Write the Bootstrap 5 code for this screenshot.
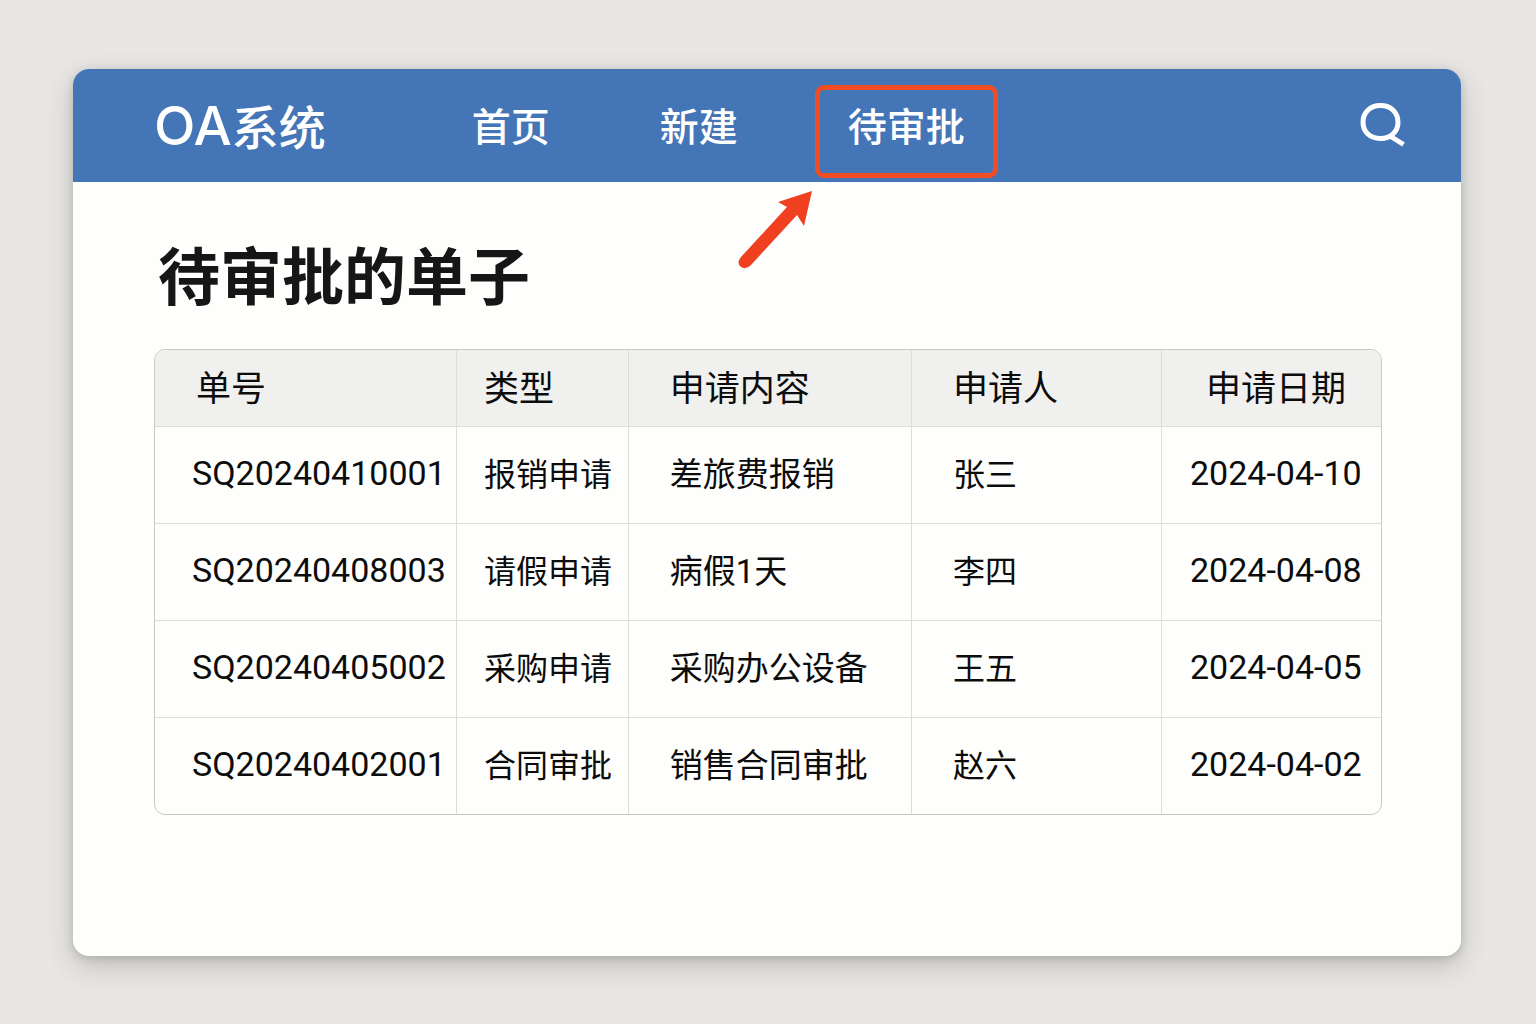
<!DOCTYPE html>
<html lang="zh-CN">
<head>
<meta charset="utf-8">
<meta name="viewport" content="width=device-width, initial-scale=1">
<title>OA系统</title>
<link href="https://cdn.jsdelivr.net/npm/bootstrap@5.3.0/dist/css/bootstrap.min.css" rel="stylesheet">
<style>
  body {
    background: #e8e7e5;
    color: #0c0c0c;
    font-family: Roboto, "Noto Sans CJK SC", sans-serif;
    padding: 69px 75px 68px 73px;
  }
  .oa-window {
    background: #fefefd;
    border-radius: 16px;
    box-shadow: 0 10px 28px rgba(60, 58, 55, .24), 0 2px 8px rgba(60, 58, 55, .18);
  }
  .oa-bar {
    background: #4476b7;
    border-radius: 16px 16px 0 0;
    min-height: 113px;
    padding: 0 54px 0 81px;
  }
  .oa-brand {
    color: #fff;
    font-size: 47px;
    font-weight: 500;
    line-height: 56px;
    margin: 4px 113px 0 0;
  }
  .oa-brand span { font-family: Inter, sans-serif; font-size: 54px; }
  .oa-bar nav { margin-top: 12px; }
  .oa-menu { gap: 44px; }
  .oa-menu .nav-link {
    color: #fff;
    font-family: "Noto Sans CJK SC", sans-serif;
    font-size: 39px;
    font-weight: 500;
    line-height: 56px;
    border: 5px solid transparent;
    border-radius: 9px;
    padding: 6px 28px 21px;
  }
  .oa-menu .nav-link.active { border-color: #f04d23; }
  .oa-arrow { top: 100%; right: 100%; margin: 12px 2px 0 0; pointer-events: none; }
  .oa-find { margin-bottom: 4px; }
  .oa-main { padding: 59px 79px 80px 81px; }
  .oa-title {
    color: #161616;
    font-size: 62px;
    font-weight: 700;
    line-height: 76px;
    margin-bottom: 32px;
    padding-left: 4px;
  }
  .oa-frame { border: 1px solid #c9c9c9; border-radius: 11px; }
  .oa-table { table-layout: fixed; color: #0c0c0c; --bs-table-bg: transparent; }
  .oa-table th, .oa-table td {
    border: 0 solid #dcdcdb;
    padding: 0 0 0 41px;
    vertical-align: middle;
    white-space: nowrap;
    line-height: 48px;
  }
  .oa-table th { background: #f0f0ef; height: 76px; font-size: 35px; font-weight: 400; padding-top: 4px; border-bottom-width: 1px; }
  .oa-table td { height: 97px; font-size: 33px; border-bottom-width: 1px; }
  .oa-table tbody tr:last-child td { border-bottom-width: 0; }
  .oa-table th + th, .oa-table td + td { border-left-width: 1px; }
  .oa-table .oa-num, .oa-table .oa-date { font-size: 34px; padding: 0 0 4px 37px; }
  .oa-table .oa-date { padding-left: 28px; }
  .oa-table .oa-kind { padding-left: 27px; }
  .oa-table td.oa-kind, .oa-table .oa-who { font-size: 32px; }
  .oa-table th.oa-when { padding-left: 44px; }
</style>
</head>
<body class="min-vh-100 d-flex">
<div class="oa-window flex-grow-1 d-flex flex-column">
  <header class="oa-bar d-flex align-items-center">
    <a class="oa-brand text-decoration-none text-nowrap" href="#"><span>OA</span>系统</a>
    <nav aria-label="主导航">
      <ul class="oa-menu nav flex-nowrap text-nowrap">
        <li class="nav-item"><a class="nav-link" href="#">首页</a></li>
        <li class="nav-item"><a class="nav-link" href="#">新建</a></li>
        <li class="nav-item position-relative">
          <a class="nav-link active" aria-current="page" href="#">待审批</a>
          <svg class="oa-arrow position-absolute" width="76" height="80" viewBox="0 0 76 80" aria-hidden="true">
            <path fill="#f0401f" d="M75 1 L41 12 L50 17 L4 67 Q-1 73 4 77 Q9 80 14 75 L60 25 L67 36 Z"/>
          </svg>
        </li>
      </ul>
    </nav>
    <button class="oa-find btn p-0 border-0 ms-auto" type="button" aria-label="搜索">
      <svg class="d-block" width="50" height="50" viewBox="0 0 50 50" fill="none" stroke="#fff" stroke-width="5">
        <path d="M23.500 6.500C34 6.500 41 13.500 41 23.500C41 32 34 39.500 23.500 39.500C12.500 39.500 6 32.500 6 23C6 13.500 13 6.500 23.500 6.500Z"/>
        <path d="M33 37L46.500 45.500"/>
      </svg>
    </button>
  </header>
  <main class="oa-main">
    <h1 class="oa-title">待审批的单子</h1>
    <div class="oa-frame overflow-hidden">
      <table class="oa-table table mb-0">
        <colgroup>
          <col style="width:24.6%"><col style="width:14%"><col style="width:23.1%"><col style="width:20.4%"><col style="width:17.9%">
        </colgroup>
        <thead>
          <tr><th scope="col">单号</th><th scope="col" class="oa-kind">类型</th><th scope="col">申请内容</th><th scope="col">申请人</th><th scope="col" class="oa-when">申请日期</th></tr>
        </thead>
        <tbody>
          <tr><td class="oa-num">SQ20240410001</td><td class="oa-kind">报销申请</td><td>差旅费报销</td><td class="oa-who">张三</td><td class="oa-date">2024-04-10</td></tr>
          <tr><td class="oa-num">SQ20240408003</td><td class="oa-kind">请假申请</td><td>病假1天</td><td class="oa-who">李四</td><td class="oa-date">2024-04-08</td></tr>
          <tr><td class="oa-num">SQ20240405002</td><td class="oa-kind">采购申请</td><td>采购办公设备</td><td class="oa-who">王五</td><td class="oa-date">2024-04-05</td></tr>
          <tr><td class="oa-num">SQ20240402001</td><td class="oa-kind">合同审批</td><td>销售合同审批</td><td class="oa-who">赵六</td><td class="oa-date">2024-04-02</td></tr>
        </tbody>
      </table>
    </div>
  </main>
</div>
<script src="https://cdn.jsdelivr.net/npm/bootstrap@5.3.0/dist/js/bootstrap.bundle.min.js"></script>
</body>
</html>
